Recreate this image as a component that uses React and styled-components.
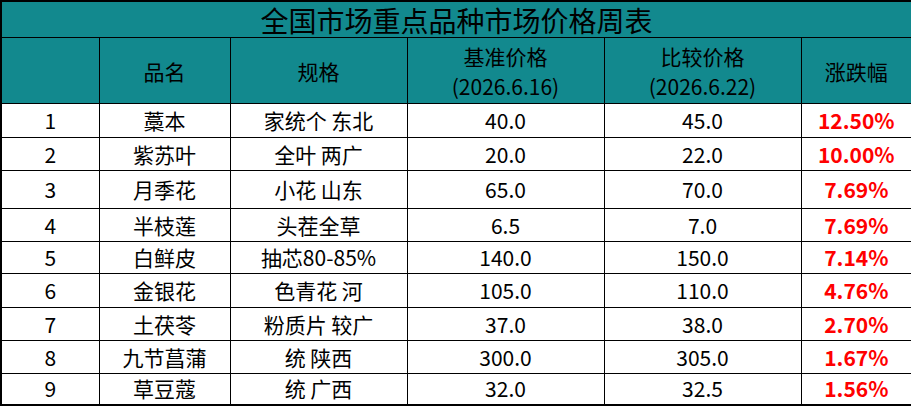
import React from "react";
import styled, { createGlobalStyle } from "styled-components";

const Global = createGlobalStyle`
  html, body { margin: 0; padding: 0; background: #ffffff; }
  body { font-family: "Noto Sans CJK SC", "Noto Sans", sans-serif; }
`;

const Table = styled.table`
  width: 911px;
  border-collapse: collapse;
  table-layout: fixed;
  border: 2px solid #000;
  font-family: "Noto Sans CJK SC", "Noto Sans", sans-serif;
  color: #000;
`;

const TitleCell = styled.th`
  height: 35px;
  padding: 0;
  background: #12898e;
  font-size: 28px;
  font-weight: 400;
  line-height: 1;
  text-align: center;
  vertical-align: middle;
  border-bottom: 1px solid #000;
`;

const HeadCell = styled.th`
  height: 65px;
  padding: 0;
  background: #12898e;
  font-size: 21px;
  font-weight: 400;
  line-height: 30px;
  text-align: center;
  vertical-align: middle;
  border: 1px solid #000;
`;

const Row = styled.tr`
  height: ${(p) => p.$h}px;
`;

const Cell = styled.td`
  padding: 0;
  font-size: 21px;
  line-height: 1;
  text-align: center;
  vertical-align: middle;
  border: 1px solid #000;
  white-space: nowrap;
  color: ${(p) => (p.$red ? "#ff0000" : "#000")};
  font-weight: ${(p) => (p.$red ? 700 : 400)};
`;

const rows = [
  ["1", "藁本", "家统个 东北", "40.0", "45.0", "12.50%", 34],
  ["2", "紫苏叶", "全叶 两广", "20.0", "22.0", "10.00%", 33],
  ["3", "月季花", "小花 山东", "65.0", "70.0", "7.69%", 38],
  ["4", "半枝莲", "头茬全草", "6.5", "7.0", "7.69%", 33],
  ["5", "白鲜皮", "抽芯80-85%", "140.0", "150.0", "7.14%", 32],
  ["6", "金银花", "色青花 河", "105.0", "110.0", "4.76%", 34],
  ["7", "土茯苓", "粉质片 较广", "37.0", "38.0", "2.70%", 33],
  ["8", "九节菖蒲", "统 陕西", "300.0", "305.0", "1.67%", 33],
  ["9", "草豆蔻", "统 广西", "32.0", "32.5", "1.56%", 31],
];

export default function App() {
  return (
    <>
      <Global />
      <Table>
        <colgroup>
          <col style={{ width: 98 }} />
          <col style={{ width: 131 }} />
          <col style={{ width: 177 }} />
          <col style={{ width: 197 }} />
          <col style={{ width: 197 }} />
          <col style={{ width: 111 }} />
        </colgroup>
        <thead>
          <tr>
            <TitleCell colSpan={6}>全国市场重点品种市场价格周表</TitleCell>
          </tr>
          <tr>
            <HeadCell></HeadCell>
            <HeadCell>品名</HeadCell>
            <HeadCell>规格</HeadCell>
            <HeadCell>
              基准价格
              <br />
              (2026.6.16)
            </HeadCell>
            <HeadCell>
              比较价格
              <br />
              (2026.6.22)
            </HeadCell>
            <HeadCell>涨跌幅</HeadCell>
          </tr>
        </thead>
        <tbody>
          {rows.map((r) => (
            <Row key={r[0]} $h={r[6]}>
              <Cell>{r[0]}</Cell>
              <Cell>{r[1]}</Cell>
              <Cell>{r[2]}</Cell>
              <Cell>{r[3]}</Cell>
              <Cell>{r[4]}</Cell>
              <Cell $red>{r[5]}</Cell>
            </Row>
          ))}
        </tbody>
      </Table>
    </>
  );
}
